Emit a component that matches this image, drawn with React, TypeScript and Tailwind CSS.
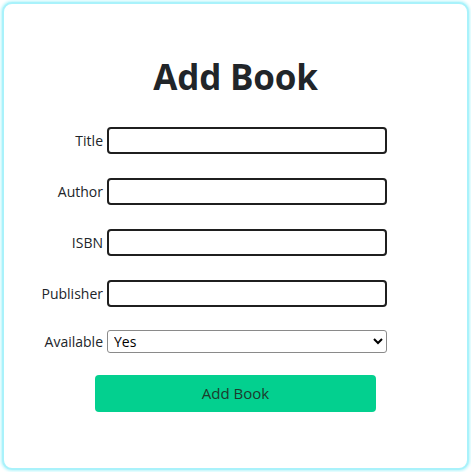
import React from "react";

const Field = ({ label }: { label: string }) => (
  <div className="flex items-center h-[27px]">
    <label className="w-[103px] pr-[4px] text-right text-[14px] text-[#212529]">{label}</label>
    <input
      type="text"
      className="w-[280px] h-[27px] border-2 border-[#1f1f1f] rounded-[4px] bg-white outline-none"
    />
  </div>
);

export default function App() {
  return (
    <div className="p-[2px] bg-white" style={{ fontFamily: '"Segoe UI", "Open Sans", "Noto Sans", sans-serif' }}>
      <div className="h-[468px] w-[467px] rounded-[10px] border-2 border-[#a9f2fb] shadow-[0_0_3px_1px_#b4f5fb] bg-white">
        <h1 className="text-center text-[35px] font-bold text-[#212529] pt-[49px] leading-[48px] tracking-[-0.2px]">Add Book</h1>
        <div className="mt-[26px] flex flex-col gap-[24px]">
          <Field label="Title" />
          <Field label="Author" />
          <Field label="ISBN" />
          <Field label="Publisher" />
          <div className="flex items-center h-[23px] mt-[-1px]">
            <label className="w-[103px] pr-[4px] text-right text-[14px] text-[#212529]">Available</label>
            <select className="w-[280px] h-[23px] border border-[#8a8a8a] rounded-[3px] bg-white text-[14px] text-black pl-[2px] outline-none">
              <option>Yes</option>
              <option>No</option>
            </select>
          </div>
        </div>
        <div className="pl-[91px] mt-[22px]">
          <button className="w-[281px] h-[37px] rounded-[4px] bg-[#03d08f] text-[15px] text-[#1d3b2c]">Add Book</button>
        </div>
      </div>
    </div>
  );
}
